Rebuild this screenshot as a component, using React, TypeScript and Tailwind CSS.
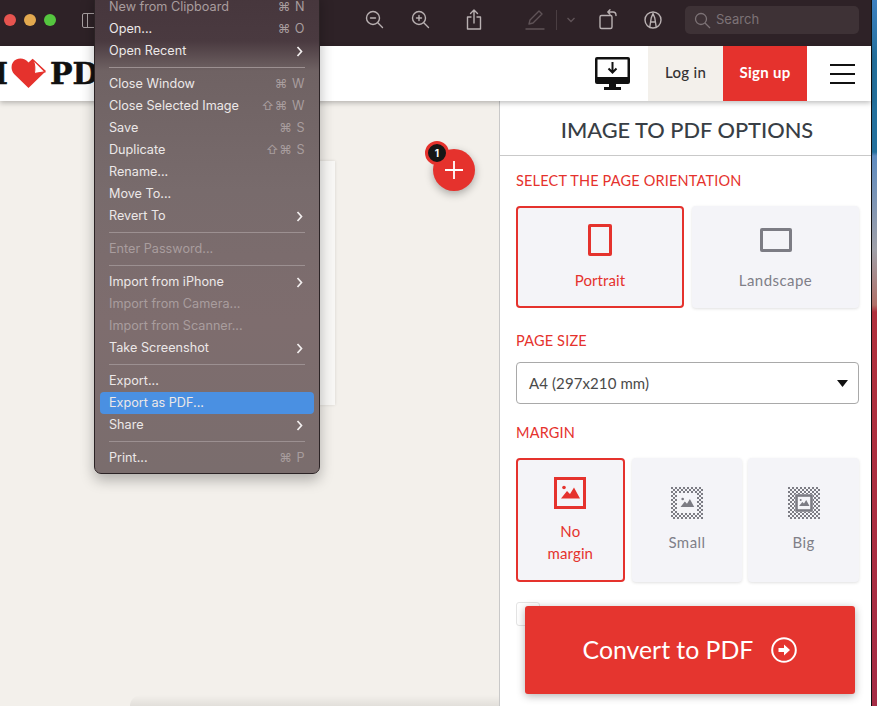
import React from "react";

const RED = "#e5322d";

type MenuEntry =
  | { sep: true }
  | { label: string; keys?: string; arrow?: boolean; off?: boolean; active?: boolean; sep?: false };

const menu: MenuEntry[] = [
  { label: "New from Clipboard", keys: "⌘ N", off: true },
  { label: "Open...", keys: "⌘ O" },
  { label: "Open Recent", arrow: true },
  { sep: true },
  { label: "Close Window", keys: "⌘ W" },
  { label: "Close Selected Image", keys: "⇧⌘ W" },
  { label: "Save", keys: "⌘ S" },
  { label: "Duplicate", keys: "⇧⌘ S" },
  { label: "Rename..." },
  { label: "Move To..." },
  { label: "Revert To", arrow: true },
  { sep: true },
  { label: "Enter Password...", off: true },
  { sep: true },
  { label: "Import from iPhone", arrow: true },
  { label: "Import from Camera...", off: true },
  { label: "Import from Scanner...", off: true },
  { label: "Take Screenshot", arrow: true },
  { sep: true },
  { label: "Export..." },
  { label: "Export as PDF...", active: true },
  { label: "Share", arrow: true },
  { sep: true },
  { label: "Print...", keys: "⌘ P" },
];

function ToolIcon({ children, w = 24 }: { children: React.ReactNode; w?: number }) {
  return (
    <svg width={w} height="24" viewBox={`0 0 ${w} 24`} fill="none" stroke="currentColor" strokeWidth="1.4" strokeLinecap="round" strokeLinejoin="round">
      {children}
    </svg>
  );
}

function Toolbar() {
  return (
    <header className="h-[46px] shrink-0 pb-[6px] bg-[#2e2227] flex items-center text-[#b9b1b2]">
      <div className="ml-[4px] flex gap-[8px]">
        <span className="w-[12px] h-[12px] rounded-full bg-[#e6544f]" />
        <span className="w-[12px] h-[12px] rounded-full bg-[#e3a94f]" />
        <span className="w-[12px] h-[12px] rounded-full bg-[#55c63f]" />
      </div>
      <div className="ml-[26px] w-[14px] h-[15px] border border-[#a79fa0] rounded-[2px] flex">
        <span className="w-[5px] border-r border-[#a79fa0]" />
      </div>
      {/* zoom out */}
      <div className="ml-[266px]">
        <ToolIcon>
          <circle cx="11" cy="10" r="6.5" />
          <path d="M8.5 10h5M16 15l4.5 4.5" />
        </ToolIcon>
      </div>
      {/* zoom in */}
      <div className="ml-[22px]">
        <ToolIcon>
          <circle cx="11" cy="10" r="6.5" />
          <path d="M8.5 10h5M11 7.5v5M16 15l4.5 4.5" />
        </ToolIcon>
      </div>
      {/* share */}
      <div className="ml-[30px]">
        <ToolIcon>
          <path d="M9 9H5.5v12h13V9H15M12 15V2M8.5 5.5 12 2l3.5 3.5" />
        </ToolIcon>
      </div>
      {/* pen, dimmed */}
      <div className="ml-[37px] text-[#5f5357]">
        <ToolIcon>
          <path d="M6 16l1-4L16 3l3 3-9 9-4 1zM3 21h18" />
        </ToolIcon>
      </div>
      <span className="ml-[9px] w-px h-[20px] bg-[#4a3e42]" />
      <svg className="ml-[9px] text-[#5f5357]" width="10" height="6" viewBox="0 0 10 6" fill="none" stroke="currentColor" strokeWidth="1.4">
        <path d="M1.5 1 5 4.5 8.5 1" />
      </svg>
      {/* rotate */}
      <div className="ml-[20px]">
        <ToolIcon w={26}>
          <rect x="4" y="7.5" width="12" height="13" rx="1.5" />
          <path d="M12 4h5c2 0 3 1 3 3.5M14 1.8 11.8 4 14 6.2" />
        </ToolIcon>
      </div>
      {/* markup */}
      <div className="ml-[18px]">
        <ToolIcon w={26}>
          <circle cx="13" cy="12" r="8" />
          <path d="M9.8 19 11.2 10 13 5.5 14.8 10l1.4 9M11.2 14h3.6" />
        </ToolIcon>
      </div>
      {/* search */}
      <div className="ml-[19px] w-[174px] h-[28px] rounded-[5px] bg-[#3e3236] flex items-center pl-[9px] gap-[5px] text-[#7d7376]">
        <svg width="17" height="17" viewBox="0 0 17 17" fill="none" stroke="currentColor" strokeWidth="1.3">
          <circle cx="7" cy="7" r="5.5" />
          <path d="m11 11 5 5" />
        </svg>
        <span className="text-[13px] font-['Inter',sans-serif]">Search</span>
      </div>
    </header>
  );
}

function Logo() {
  return (
    <div className="w-[94px] flex items-center font-['DejaVu_Serif',serif] font-bold text-[30px] leading-none text-[#111] [-webkit-text-stroke:0.5px_#111] select-none">
      <span className="ml-[-6px]">I</span>
      <svg className="ml-[3px] shrink-0" width="36" height="31" viewBox="0 0 35 31" preserveAspectRatio="none">
        <path d="M17 30 3 16C-1 11 0 4 5 1.500 9 -.5 14 .5 17 4.500L21 .8 34 13Z" fill={RED} />
        <path d="M21.500 2 33 13.800 22.500 15.500C24 11 23 6 21.500 2Z" fill="#fff" stroke={RED} strokeWidth="1" />
      </svg>
      <span className="ml-[3px] whitespace-nowrap">PDF</span>
    </div>
  );
}

function SiteNav() {
  return (
    <nav className="h-[55px] shrink-0 bg-white flex items-stretch relative z-10 shadow-[0_2px_5px_rgba(0,0,0,0.25)] font-['Lato',sans-serif]">
      <Logo />
      <div className="flex-1" />
      <div className="flex items-center mr-[18px]">
        <svg width="35" height="33" viewBox="0 0 35 33">
          <path d="M2 0h31a2 2 0 0 1 2 2v23a2 2 0 0 1-2 2H21v3h5v3H9v-3h5v-3H2a2 2 0 0 1-2-2V2a2 2 0 0 1 2-2Z" fill="#111" />
          <rect x="2.500" y="2.500" width="30" height="17.500" fill="#fff" />
          <path d="M17.500 5v10M13.500 11.500l4 4 4-4" fill="none" stroke="#111" strokeWidth="2" />
        </svg>
      </div>
      <div className="w-[75px] pb-[2px] bg-[#f3f0eb] flex items-center justify-center text-[15px] font-medium tracking-[0.3px] text-[#333]">Log in</div>
      <div className="w-[84px] pb-[2px] bg-[#e5322d] flex items-center justify-center text-[15px] font-bold tracking-[0.3px] text-white">Sign up</div>
      <div className="w-[64px] pt-[1px] pl-[6px] flex flex-col justify-center items-center gap-[7px]">
        <span className="w-[25px] h-[2px] bg-[#111]" />
        <span className="w-[25px] h-[2px] bg-[#111]" />
        <span className="w-[25px] h-[2px] bg-[#111]" />
      </div>
    </nav>
  );
}

function FileMenu() {
  return (
    <div className="absolute left-[94px] top-[-10px] w-[226px] z-30 rounded-[7px] border border-[#2b2325] pt-[5px] pb-[4px] px-[5px] shadow-[0_6px_14px_rgba(0,0,0,0.28)] bg-[linear-gradient(180deg,#46363c_0px,#4a3a40_50px,#6f6263_80px,#786b6c_200px,#7e6d6e_330px,#7a6d6d_480px)] font-['Inter',sans-serif] text-[12.65px] text-[#ece8e8]">
      {menu.map((m, i) =>
        m.sep ? (
          <div key={i} className="h-[11px] flex items-center px-[9px]">
            <span className="w-full h-px bg-[#9c9091]" />
          </div>
        ) : (
          <div key={i} className={`h-[22px] px-[9px] rounded-[4px] flex items-center justify-between ${m.active ? "bg-[#4a90e2]" : ""} ${m.off ? "text-[#a99d9e]" : ""}`}>
            <span>{m.label}</span>
            {m.keys && <span className="text-[#a89d9e] tracking-[0.5px]">{m.keys}</span>}
            {m.arrow && (
              <svg className="mr-[2px]" width="7" height="11" viewBox="0 0 7 11" fill="none" stroke="#f2eeee" strokeWidth="1.7">
                <path d="m1.500 1 4 4.500-4 4.500" />
              </svg>
            )}
          </div>
        )
      )}
    </div>
  );
}

function Preview() {
  return (
    <main className="flex-1 min-w-0 relative bg-[#f3f0eb]">
      <div className="ml-[130px] mt-[60px] w-[205px] h-[244px] bg-[#f8f7f5] shadow-[0_0_3px_rgba(0,0,0,0.12)]" />
      {/* add-file button and its counter */}
      <div className="absolute left-[433px] top-[48px] w-[42px] h-[42px] rounded-full bg-[#e5322d] flex items-center justify-center shadow-[0_3px_8px_rgba(0,0,0,0.3)]">
        <svg width="18" height="18" viewBox="0 0 18 18" stroke="#fff" strokeWidth="1.800">
          <path d="M9 0v18M0 9h18" />
        </svg>
      </div>
      <div className="absolute left-[425px] top-[40px] w-[24px] h-[24px] rounded-full bg-[#161616] border-[3px] border-[#e5322d] flex items-center justify-center text-white text-[10px] font-bold font-['Inter',sans-serif]">
        1
      </div>
      {/* soft shade along the bottom of the window */}
      <div className="absolute left-[130px] right-0 bottom-0 h-[11px] rounded-tl-[14px] bg-[linear-gradient(180deg,rgba(0,0,0,0),rgba(0,0,0,0.07))]" />
    </main>
  );
}

function MarginIcon({ level, active }: { level: 0 | 1 | 2; active?: boolean }) {
  const color = active ? RED : "#7c7c84";
  const pattern = `chk${level}`;
  const inset = level === 0 ? 0 : level === 1 ? 6 : 7;
  return (
    <svg width="32" height="32" viewBox="0 0 32 32">
      <defs>
        <pattern id={pattern} width="4" height="4" patternUnits="userSpaceOnUse">
          <rect width="2" height="2" fill={color} />
          <rect x="2" y="2" width="2" height="2" fill={color} />
        </pattern>
      </defs>
      {level > 0 && <rect width="32" height="32" fill={`url(#${pattern})`} />}
      {level > 0 && <rect x={inset} y={inset} width={32 - inset * 2} height={32 - inset * 2} fill="#f4f4f8" />}
      {level !== 1 && (
        <rect x={inset + 1.500} y={inset + 1.500} width={32 - inset * 2 - 3} height={32 - inset * 2 - 3} fill="none" stroke={color} strokeWidth={level === 0 ? 3 : 2.600} />
      )}
      <g transform={`translate(16 16) scale(${level === 0 ? 1 : level === 1 ? 0.72 : 0.55}) translate(-16 -16)`} fill={color}>
        <circle cx="10" cy="10.500" r="1.800" />
        <path d="M7 21.500 13 14l3 3 4-6.500 6 11Z" />
      </g>
    </svg>
  );
}

function Card({ label, active, children, className }: { label: React.ReactNode; active?: boolean; children: React.ReactNode; className: string }) {
  return (
    <div
      className={`${className} rounded-[4px] bg-[#f4f4f8] flex flex-col items-center justify-center text-[15px] leading-[22px] text-center ${
        active ? "border-2 border-[#e5322d] text-[#e5322d] tracking-[0.1px]" : "text-[#7f7f88] tracking-[0.45px] shadow-[0_1px_3px_rgba(0,0,0,0.12)]"
      }`}
    >
      {children}
      {label}
    </div>
  );
}

function Label({ children }: { children: React.ReactNode }) {
  return <h3 className="text-[14.500px] leading-[20px] text-[#e5322d] tracking-[0.18px]">{children}</h3>;
}

function Options() {
  return (
    <aside className="w-[372px] shrink-0 relative bg-white border-l border-[#c9c9c9] font-['Lato',sans-serif]">
      <h2 className="h-[55px] pt-[4px] pl-[3px] flex items-center justify-center border-b border-[#c9c9c9] text-[21.8px] font-medium text-[#383e45]">
        IMAGE TO PDF OPTIONS
      </h2>
      <div className="pl-[16px] pr-[12px] pt-[15px]">
        <Label>SELECT THE PAGE ORIENTATION</Label>
        <div className="mt-[15px] flex gap-[8px]">
          <Card active label="Portrait" className="w-[168px] h-[102px] gap-[13px]">
            <span className="w-[24px] h-[32px] border-[3px] border-[#e5322d] rounded-[2px]" />
          </Card>
          <Card label="Landscape" className="w-[167px] h-[102px] pt-[5px] gap-[17px]">
            <span className="w-[32px] h-[24px] border-[3px] border-[#7c7c84] rounded-[2px]" />
          </Card>
        </div>
        <div className="mt-[23px]">
          <Label>PAGE SIZE</Label>
        </div>
        <div className="mt-[11px] w-[343px] h-[42px] border border-[#a9a9a9] rounded-[4px] flex items-center justify-between pl-[12px] pr-[10px] text-[15px] tracking-[0.1px] text-[#4a4a4a]">
          <span>A4 (297x210 mm)</span>
          <svg width="11" height="7" viewBox="0 0 11 7">
            <path d="M0 0h11L5.500 7Z" fill="#111" />
          </svg>
        </div>
        <div className="mt-[19px]">
          <Label>MARGIN</Label>
        </div>
        <div className="mt-[15px] flex gap-[7px]">
          <Card active label={<span className="mt-[11px]">No<br />margin</span>} className="w-[109px] h-[124px]">
            <MarginIcon level={0} active />
          </Card>
          <Card label={<span className="mt-[12px]">Small</span>} className="w-[111px] h-[124px]">
            <MarginIcon level={1} />
          </Card>
          <Card label={<span className="mt-[12px]">Big</span>} className="w-[111px] h-[124px] ml-[-1px]">
            <MarginIcon level={2} />
          </Card>
        </div>
        <div className="mt-[20px] w-[24px] h-[24px] border border-[#e4e4e4] rounded-[3px]" />
      </div>
      <div className="absolute left-[25px] top-[505px] w-[330px] h-[88px] rounded-[3px] bg-[#e5352f] flex items-center justify-center gap-[18px] text-[24.8px] text-white shadow-[0_2px_8px_rgba(0,0,0,0.3)]">
        <span>Convert to PDF</span>
        <svg width="26" height="26" viewBox="0 0 26 26">
          <circle cx="13" cy="13" r="11.800" fill="none" stroke="#fff" strokeWidth="2" />
          <path d="M7.500 11h5.500V7.500l6 5.500-6 5.500V15H7.500Z" fill="#fff" />
        </svg>
      </div>
    </aside>
  );
}

export default function App() {
  return (
    <div className="w-[877px] h-[706px] overflow-hidden flex bg-[#2e2227]">
      <div className="w-[871px] h-full shrink-0 flex flex-col relative">
        <Toolbar />
        <SiteNav />
        <div className="flex-1 min-h-0 flex">
          <Preview />
          <Options />
        </div>
        <FileMenu />
      </div>
      <div className="flex-1 border-l border-[#111] bg-[linear-gradient(180deg,#3d80c0_0px,#24709c_60px,#24709c_152px,#5f8cc0_156px,#a0a0a8_250px,#b07068_305px,#b0303c_312px,#a52c45_706px)]" />
    </div>
  );
}
